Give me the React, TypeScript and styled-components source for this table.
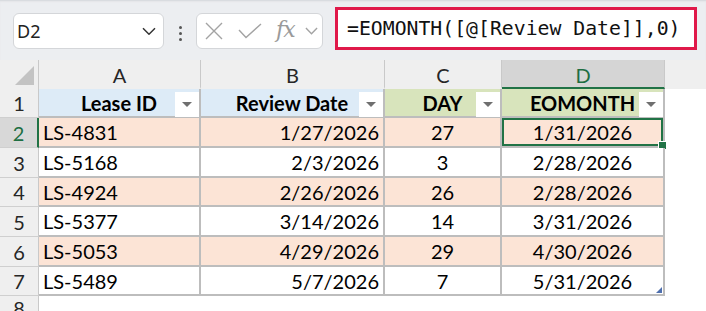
import React from "react";
import styled, { createGlobalStyle, css } from "styled-components";

const Global = createGlobalStyle`
  html, body { margin: 0; padding: 0; background: #ffffff; }
  * { box-sizing: border-box; }
`;

const Frame = styled.div`
  width: 706px;
  height: 311px;
  overflow: hidden;
  display: flex;
  flex-direction: column;
  background: #ffffff;
`;

const Toolbar = styled.div`
  height: 60px;
  flex: none;
  display: flex;
  align-items: flex-start;
  padding: 7px 9px 0 13px;
  background: #eceef1;
  box-shadow: inset 0 2px 2px -1px #d3d6da;
`;

const NameBox = styled.div`
  margin-top: 6px;
  width: 151px;
  height: 36px;
  display: flex;
  align-items: center;
  justify-content: space-between;
  padding: 0 7px 0 3px;
  background: #ffffff;
  border: 1px solid #d4d6d9;
  border-radius: 6px;
  font-family: "Noto Sans", "Open Sans", sans-serif;
  font-size: 18px;
  color: #222;
`;

const Dots = styled.div`
  width: 32px;
  height: 49px;
  display: flex;
  flex-direction: column;
  align-items: center;
  justify-content: center;
  gap: 3px;
  padding-top: 4px;
`;

const Dot = styled.span`
  width: 3px;
  height: 3px;
  border-radius: 50%;
  background: #555;
`;

const FxBox = styled.div`
  margin-top: 6px;
  width: 127px;
  height: 36px;
  display: flex;
  align-items: center;
  padding-left: 8px;
  background: #ffffff;
  border: 1px solid #d4d6d9;
  border-radius: 6px;
`;

const FxText = styled.span`
  width: 23px;
  margin: 0 6px 0 14px;
  font-family: "DejaVu Serif", "Liberation Serif", serif;
  font-style: italic;
  font-size: 22px;
  color: #9a9a9a;
  letter-spacing: -1px;
  line-height: 1;
  padding-bottom: 3px;
`;

const FormulaBox = styled.div`
  margin-left: 12px;
  width: 362px;
  height: 43px;
  display: flex;
  align-items: center;
  padding-left: 9px;
  background: #ffffff;
  border: 3px solid #e0194a;
  font-family: "DejaVu Sans Mono", "Liberation Mono", monospace;
  font-size: 19.8px;
  color: #111;
  white-space: nowrap;
`;

const rowHeights = [29, 30, 30, 29, 30, 30, 29];

const Sheet = styled.div<{ $rows: string }>`
  flex: 1;
  display: grid;
  grid-template-columns: 39px 162px 184px 117px 163px 1fr;
  grid-template-rows: ${(p) => p.$rows};
  font-family: Lato, "Open Sans", sans-serif;
  font-size: 20px;
  color: #000;
`;

const Corner = styled.div`
  background: #efefef;
  border-right: 1px solid #c9c9c9;
  display: flex;
  align-items: flex-end;
  justify-content: flex-end;
  padding: 0 4px 4px 0;
`;

const CornerTriangle = styled.div`
  width: 0;
  height: 0;
  border-left: 19px solid transparent;
  border-bottom: 19px solid #c3c3c3;
`;

const ColHeader = styled.div<{ $active?: boolean; $last?: boolean }>`
  display: flex;
  align-items: center;
  justify-content: center;
  background: ${(p) => (p.$active ? "#d5d5d5" : "#efefef")};
  color: ${(p) => (p.$active ? "#1e6e42" : "#262626")};
  border-right: ${(p) => (p.$last ? "none" : "1px solid #c9c9c9")};
  border-bottom: 2px solid ${(p) => (p.$active ? "#217346" : "#efefef")};
  padding-top: 2px;
`;

const RowHeader = styled.div<{ $active?: boolean }>`
  display: flex;
  align-items: center;
  justify-content: center;
  background: ${(p) => (p.$active ? "#d8d8d8" : "#efefef")};
  color: ${(p) => (p.$active ? "#1e6e42" : "#262626")};
  border-right: ${(p) => (p.$active ? "2px solid #217346" : "1px solid #c9c9c9")};
  border-bottom: 1px solid #cfcfcf;
`;

const fills = {
  blue: "#ddebf7",
  green: "#d8e4bc",
  peach: "#fce4d6",
  white: "#ffffff",
};

const HeadCell = styled.div<{ $fill: keyof typeof fills }>`
  position: relative;
  display: flex;
  align-items: center;
  justify-content: center;
  font-weight: 700;
  background: ${(p) => fills[p.$fill]};
  border-right: 2px solid #bdbdbd;
  border-bottom: 2px solid #bdbdbd;
`;

const FilterButton = styled.div`
  position: absolute;
  right: 0;
  top: 3px;
  width: 24px;
  height: 25px;
  background: #ffffff;
  display: flex;
  align-items: center;
  justify-content: center;
  &::before {
    content: "";
    width: 0;
    height: 0;
    border-left: 5px solid transparent;
    border-right: 5px solid transparent;
    border-top: 5px solid #6f6f6f;
  }
`;

const Cell = styled.div<{ $fill: keyof typeof fills; $align: "left" | "right" | "center"; $selected?: boolean }>`
  position: relative;
  display: flex;
  align-items: center;
  padding: 0 4px;
  background: ${(p) => fills[p.$fill]};
  border-right: 2px solid #bdbdbd;
  border-bottom: 2px solid #bdbdbd;
  justify-content: ${(p) =>
    p.$align === "left" ? "flex-start" : p.$align === "right" ? "flex-end" : "center"};
  ${(p) =>
    p.$selected &&
    css`
      box-shadow: inset 0 0 0 2px #217346;
      &::after {
        content: "";
        position: absolute;
        right: -4px;
        bottom: -4px;
        width: 7px;
        height: 7px;
        background: #217346;
        border: 1px solid #ffffff;
      }
    `}
`;

const ResizeMark = styled.span`
  position: absolute;
  right: 1px;
  bottom: 1px;
  width: 0;
  height: 0;
  border-left: 6px solid transparent;
  border-bottom: 6px solid #4e6fae;
`;

const Blank = styled.div``;

const XIcon = () => (
  <svg width="18" height="18" viewBox="0 0 18 18">
    <path d="M1 1 L17 17 M17 1 L1 17" stroke="#a3a3a3" strokeWidth="1.4" fill="none" />
  </svg>
);

const CheckIcon = () => (
  <svg width="24" height="16" viewBox="0 0 24 16" style={{ marginLeft: 15 }}>
    <path d="M1 7 L8 14.5 L23 1" stroke="#a3a3a3" strokeWidth="1.4" fill="none" />
  </svg>
);

const Chevron = ({ color, w }: { color: string; w: number }) => (
  <svg width={w} height={w * 0.6} viewBox="0 0 14 8">
    <path d="M1 1 L7 7 L13 1" stroke={color} strokeWidth="1.5" fill="none" />
  </svg>
);

const data = [
  ["LS-4831", "1/27/2026", "27", "1/31/2026"],
  ["LS-5168", "2/3/2026", "3", "2/28/2026"],
  ["LS-4924", "2/26/2026", "26", "2/28/2026"],
  ["LS-5377", "3/14/2026", "14", "3/31/2026"],
  ["LS-5053", "4/29/2026", "29", "4/30/2026"],
  ["LS-5489", "5/7/2026", "7", "5/31/2026"],
];

export default function App() {
  const rowsTemplate = ["29px", ...rowHeights.map((h) => `${h}px`), "1fr"].join(" ");
  return (
    <Frame>
      <Global />
      <Toolbar>
        <NameBox>
          <span>D2</span>
          <Chevron color="#333" w={14} />
        </NameBox>
        <Dots>
          <Dot />
          <Dot />
          <Dot />
        </Dots>
        <FxBox>
          <XIcon />
          <CheckIcon />
          <FxText>fx</FxText>
          <Chevron color="#a3a3a3" w={13} />
        </FxBox>
        <FormulaBox>=EOMONTH([@[Review Date]],0)</FormulaBox>
      </Toolbar>
      <Sheet $rows={rowsTemplate}>
        <Corner>
          <CornerTriangle />
        </Corner>
        <ColHeader>A</ColHeader>
        <ColHeader>B</ColHeader>
        <ColHeader>C</ColHeader>
        <ColHeader $active>D</ColHeader>
        <ColHeader $last />

        <RowHeader>1</RowHeader>
        <HeadCell $fill="blue">
          Lease ID
          <FilterButton />
        </HeadCell>
        <HeadCell $fill="blue">
          Review Date
          <FilterButton />
        </HeadCell>
        <HeadCell $fill="green">
          DAY
          <FilterButton />
        </HeadCell>
        <HeadCell $fill="green">
          EOMONTH
          <FilterButton />
        </HeadCell>
        <Blank />

        {data.map((r, i) => {
          const fill = i % 2 === 0 ? "peach" : "white";
          const last = i === data.length - 1;
          return (
            <React.Fragment key={r[0]}>
              <RowHeader $active={i === 0}>{i + 2}</RowHeader>
              <Cell $fill={fill} $align="left">{r[0]}</Cell>
              <Cell $fill={fill} $align="right">{r[1]}</Cell>
              <Cell $fill={fill} $align="center">{r[2]}</Cell>
              <Cell $fill={fill} $align="center" $selected={i === 0}>
                {r[3]}
                {last && <ResizeMark />}
              </Cell>
              <Blank />
            </React.Fragment>
          );
        })}

        <RowHeader>8</RowHeader>
        <Blank />
        <Blank />
        <Blank />
        <Blank />
        <Blank />
      </Sheet>
    </Frame>
  );
}
